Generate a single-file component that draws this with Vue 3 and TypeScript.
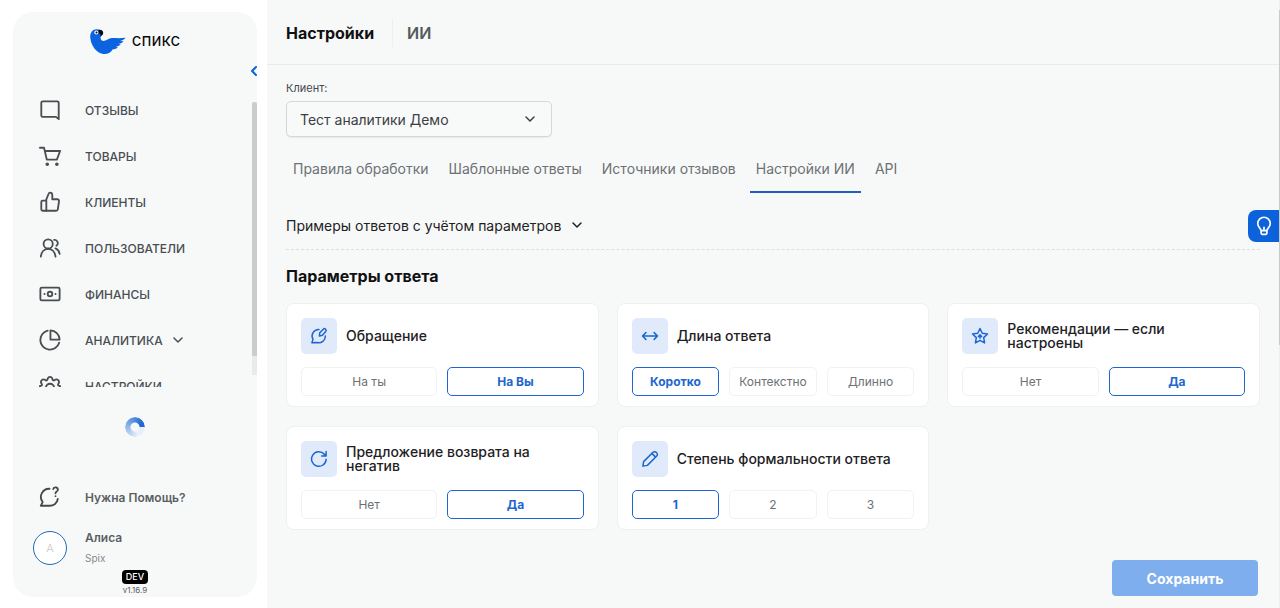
<script setup lang="ts">
import { ref } from 'vue'

type IconName =
  | 'message' | 'cart' | 'like' | 'users' | 'cash' | 'pie' | 'gear'
  | 'compose' | 'arrows' | 'star' | 'refresh' | 'pencil'

interface NavItem { label: string; icon: IconName; expandable?: boolean }
interface Param { title: string; icon: IconName; options: string[]; value: string }

const icons: Record<IconName, string> = {
  message: '<path d="M4 2.500h16a1.500 1.500 0 0 1 1.500 1.500v18L18.500 19.500H4A1.500 1.500 0 0 1 2.500 18V4A1.500 1.500 0 0 1 4 2.500z"/>',
  cart: '<path d="M1 3h4.500l3 13h11L23 6.500H6.500"/><circle cx="9" cy="21" r="1"/><circle cx="19.500" cy="21" r="1"/>',
  like: '<path d="M7.500 10.500 10.500 3c.3-1 .8-1.300 1.500-1.300 1.500 0 2.500 1 2.500 2.800V9H20c1.200 0 2 1 1.800 2.200l-1.200 8.500c-.2 1.200-1 1.800-2 1.800H4A1.500 1.500 0 0 1 2.500 20v-8A1.500 1.500 0 0 1 4 10.500h3.500z"/><path d="M8 10.500v11"/>',
  users: '<circle cx="10" cy="7.500" r="5"/><path d="M2 21.500c.5-5 3.500-8.500 8-8.500s7.500 3.500 8 8.500M16.500 3.200c3.500-.6 5.500 4 2.500 6.300M18 12.500c2.500 1 4 3 4.500 6"/>',
  cash: '<rect x="1.500" y="5" width="21" height="14" rx="1.500"/><circle cx="12" cy="12" r="2.500"/><path d="M6 12h.1M18 12h.1"/>',
  pie: '<path d="M9.500 1.800A10.500 10.500 0 1 0 22 15M12.500 1.500a10.500 10.500 0 0 1 10 10h-10z"/>',
  gear: '<path d="M12 2c1.800 0 2.500 1.200 2.800 3 .3 1 1.200 1.300 2 .7 1.500-1.200 3-1.300 4.200 0 1.200 1.200 1 2.700 0 4-.6.900-.2 1.800.8 2 3 .5 3 5.600 0 6-1 .2-1.400 1.100-.8 2 2 3-1 6-4.200 4H7.200c-3 2-6.200-1-4.200-4 .6-.9.200-1.800-.8-2-3-.4-3-5.500 0-6 1-.2 1.400-1.100.8-2-1-1.300-1.200-2.800 0-4 1.200-1.300 2.700-1.200 4.200 0 .8.6 1.700.3 2-.7C9.500 3.200 10.200 2 12 2z"/><circle cx="12" cy="14" r="4.500"/>',
  compose: '<path d="M12 3.300A8.800 8.800 0 0 0 4 16.500L2.500 21l6.500-.4c6.500 1.500 11.500-2.600 11.500-8.600M12.500 12l.5-4.200 4.800-4.900c1.900-1.900 5 1 3.200 3.100L16.500 11z"/>',
  arrows: '<path d="M2 12h20M6.500 7.500 2 12l4.500 4.500M17.500 7.500 22 12l-4.500 4.500"/>',
  star: '<path d="m12 2 3 6.300 7 1-5.100 4.900 1.200 7L12 17.800 5.900 21.200l1.200-7L2 9.300l7-1z"/><path d="M12 10.500v4.500M9.800 12.800 12 10.500l2.200 2.300"/>',
  refresh: '<path d="M21.500 12.500A9.700 9.700 0 1 1 19 5.500L21.500 8M21.500 2v6h-6"/>',
  pencil: '<path d="M2.500 21.500 3.500 15.500 16 3c2.800-2.800 7.800 2.200 5 5L8.500 20.500zM14.500 4.500l5 5"/>',
}

const nav: NavItem[] = [
  { label: 'ОТЗЫВЫ', icon: 'message' },
  { label: 'ТОВАРЫ', icon: 'cart' },
  { label: 'КЛИЕНТЫ', icon: 'like' },
  { label: 'ПОЛЬЗОВАТЕЛИ', icon: 'users' },
  { label: 'ФИНАНСЫ', icon: 'cash' },
  { label: 'АНАЛИТИКА', icon: 'pie', expandable: true },
  { label: 'НАСТРОЙКИ', icon: 'gear' },
]

const tabs = ['Правила обработки', 'Шаблонные ответы', 'Источники отзывов', 'Настройки ИИ', 'API']
const activeTab = ref('Настройки ИИ')
const client = ref('Тест аналитики Демо')

const params = ref<Param[]>([
  { title: 'Обращение', icon: 'compose', options: ['На ты', 'На Вы'], value: 'На Вы' },
  { title: 'Длина ответа', icon: 'arrows', options: ['Коротко', 'Контекстно', 'Длинно'], value: 'Коротко' },
  { title: 'Рекомендации — если настроены', icon: 'star', options: ['Нет', 'Да'], value: 'Да' },
  { title: 'Предложение возврата на негатив', icon: 'refresh', options: ['Нет', 'Да'], value: 'Да' },
  { title: 'Степень формальности ответа', icon: 'pencil', options: ['1', '2', '3'], value: '1' },
])
</script>

<template>
  <div class="layout">
    <aside class="sidebar">
      <a class="logo" href="#">
        <svg class="bird" viewBox="0 0 36 26" aria-hidden="true">
          <path fill="#0b63e0" d="M.3 9C-.3 4 2.500.3 6.500.3c3.500 0 5.500 2 5 4.700-.3 2-1.500 3.500-.5 5.500 1.200 2.200 4 1.500 6.500 0C21.500 8 26 9.800 35.500 8.800c-1.200 1.700-3 2.700-5.500 3.200l3.500.2c-1.500 1.800-3.300 2.600-5.700 2.800l3 .3c-1.400 1.600-3 2.300-5.300 2.400l2.300.5c-1.200 1.500-2.800 2-5 2C20.500 24 17 25.500 13 25 6.500 24 1.200 17 .3 9z" />
          <path fill="#0a0a0a" d="M8.500 1c2.500-.8 5 .7 4.700 3.200-.2 1.400-1 2.300-2.700 3.300.3-1.700 0-2.700-1.500-3z" />
          <circle cx="6.300" cy="3.600" r="2" fill="#fff" /><circle cx="6.500" cy="3.600" r="1" fill="#0a0a0a" />
        </svg>
        <span>спикс</span>
      </a>
      <button class="collapse" type="button" aria-label="Свернуть меню">
        <svg viewBox="0 0 8 12"><path d="M6 2 2 6l4 4" /></svg>
      </button>
      <div class="nav-area">
        <nav>
          <a v-for="item in nav" :key="item.label" href="#">
            <svg class="icon" viewBox="0 0 24 24" aria-hidden="true" v-html="icons[item.icon]" />
            <span>{{ item.label }}</span>
            <svg v-if="item.expandable" class="chevron" viewBox="0 0 10 10"><path d="m1 3 4 4 4-4" /></svg>
          </a>
        </nav>
        <div class="track"><div class="thumb" /></div>
      </div>
      <div class="bottom">
        <div class="spinner" role="status" aria-label="Загрузка" />
        <a class="help" href="#">
          <svg class="icon" viewBox="0 0 24 24" aria-hidden="true">
            <path d="M11.500 3A9 9 0 0 0 4 17.500L2 21.500h8.500c5 .5 9.500-2.500 10-7.500M15.500 3.500c.5-3 5.500-2.500 5 1-.3 1.800-2.500 1.500-2.500 3.500M18 11v.1" />
          </svg>
          <span>Нужна Помощь?</span>
        </a>
        <div class="user">
          <span class="avatar">А</span>
          <div><div class="name">Алиса</div><div class="company">Spix</div></div>
        </div>
        <span class="dev">DEV</span>
        <span class="version">v1.16.9</span>
      </div>
    </aside>

    <main>
      <header>
        <h1>Настройки</h1>
        <span class="crumb">ИИ</span>
      </header>

      <div class="content">
        <label for="client">Клиент:</label>
        <div class="select">
          <select id="client" v-model="client"><option>Тест аналитики Демо</option></select>
          <svg class="chevron" viewBox="0 0 10 10"><path d="m1 3 4 4 4-4" /></svg>
        </div>

        <div class="tabs" role="tablist">
          <button
            v-for="tab in tabs" :key="tab" type="button" role="tab"
            :aria-selected="tab === activeTab" :class="{ active: tab === activeTab }"
            @click="activeTab = tab"
          >{{ tab }}</button>
        </div>

        <button class="examples" type="button">
          <span>Примеры ответов с учётом параметров</span>
          <svg class="chevron" viewBox="0 0 10 10"><path d="m1 3 4 4 4-4" /></svg>
        </button>

        <h2>Параметры ответа</h2>
        <div class="cards">
          <section v-for="param in params" :key="param.title" class="card">
            <div class="card-head">
              <span class="tile"><svg viewBox="0 0 24 24" aria-hidden="true" v-html="icons[param.icon]" /></span>
              <h3>{{ param.title }}</h3>
            </div>
            <div class="options">
              <button
                v-for="option in param.options" :key="option" type="button"
                :aria-pressed="option === param.value" :class="{ active: option === param.value }"
                @click="param.value = option"
              >{{ option }}</button>
            </div>
          </section>
        </div>
      </div>

      <footer><button class="save" type="button">Сохранить</button></footer>
    </main>

    <div class="page-track"><div class="page-thumb" /></div>
    <button class="tips" type="button" aria-label="Подсказки">
      <svg viewBox="0 0 24 24"><path d="M8.500 17.500c0-2.500-4-4-4-8.500a7.500 7.500 0 0 1 15 0c0 4.500-4 6-4 8.500zM8.500 17.500v3a1.500 1.500 0 0 0 1.500 1.500h4a1.500 1.500 0 0 0 1.500-1.500v-3M12 17v-3.500" /></svg>
    </button>
  </div>
</template>

<style>
body { background: #fff; }
</style>

<style scoped>
* { box-sizing: border-box; }
.layout {
  position: relative;
  display: flex;
  height: 100vh;
  min-height: 520px;
  overflow: hidden;
  font-family: Inter, "Open Sans", sans-serif;
  color: #111;
}
button, select { font: inherit; color: inherit; cursor: pointer; }
button { padding: 0; border: 0; background: none; }
a { color: inherit; text-decoration: none; }
h1, h2, h3 { margin: 0; }
svg { fill: none; stroke: currentColor; stroke-width: 2; stroke-linecap: round; stroke-linejoin: round; }
.chevron { width: 10px; height: 10px; stroke-width: 1.5; flex: none; }

.sidebar {
  position: relative;
  flex: none;
  display: flex;
  flex-direction: column;
  width: 244px;
  margin: 12px 10px 11px 13px;
  border-radius: 20px;
  background: #f7f9f9;
  color: #4a4e52;
}
.logo {
  display: flex;
  align-items: center;
  justify-content: center;
  gap: 6px;
  height: 59px;
  flex: none;
  margin-bottom: 16px;
  color: #0a0a0a;
  font-size: 17px;
  font-weight: 400;
}
.logo span { padding-bottom: 4px; }
.bird { width: 36px; height: 26px; stroke: none; }
.collapse { position: absolute; top: 52px; right: -1px; width: 8px; height: 14px; color: #0b63d6; }
.collapse svg { display: block; width: 8px; height: 14px; }
.nav-area { flex: 1; min-height: 0; display: flex; justify-content: space-between; }
nav { overflow: hidden; flex: 1; }
nav a { display: flex; align-items: center; height: 46px; padding-left: 26px; font-size: 12px; font-weight: 500; }
.icon { width: 22px; height: 22px; margin-right: 24px; flex: none; }
nav .chevron { margin-left: 10px; }
.track { width: 5px; margin: 15px 0 12px; background: #e9ebeb; }
.thumb { height: 93%; border-radius: 3px 3px 0 0; background: #cbcdcd; }
.bottom { flex: none; display: flex; flex-direction: column; align-items: center; height: 210px; padding-top: 30px; }
.spinner {
  width: 20px;
  height: 20px;
  flex: none;
  border-radius: 50%;
  background: conic-gradient(from 90deg, #e6effb 0%, #e6effb 20%, #1f69d2 92%, #1f69d2 100%);
  mask: radial-gradient(circle, transparent 4px, #000 5px);
}
.help { display: flex; align-items: center; align-self: stretch; height: 40px; margin-top: 40px; padding-left: 26px; font-size: 12px; font-weight: 600; color: #5b5f63; }
.help .icon { color: #44484c; }
.user { display: flex; align-items: center; align-self: stretch; gap: 18px; height: 34px; margin-top: 14px; padding-left: 20px; }
.avatar {
  display: flex;
  align-items: center;
  justify-content: center;
  width: 34px;
  height: 34px;
  border: 1px solid #1f69b8;
  border-radius: 50%;
  background: #fff;
  color: #cfd2d4;
  font-size: 11px;
}
.name { font-size: 12px; line-height: 16px; font-weight: 600; color: #5b5f63; }
.company { margin-top: 4px; font-size: 10px; line-height: 16px; color: #85898c; }
.dev { margin-top: 5px; padding: 0 4px; border-radius: 4px; background: #000; color: #fff; font-size: 9px; line-height: 14px; font-weight: 500; }
.version { font-size: 8px; line-height: 12px; color: #5b5f63; }

main { flex: 1; min-width: 0; display: flex; flex-direction: column; background: #f7f9f9; }
header { display: flex; align-items: center; flex: none; height: 65px; padding: 2px 19px 0; border-bottom: 1px solid #e8eaec; }
h1 { padding-right: 18px; font-size: 16px; line-height: 28px; font-weight: 700; border-right: 1px solid #eceeef; }
.crumb { padding-left: 14px; font-size: 16px; font-weight: 600; color: #55595c; }
.content { padding: 15px 19px 0; }
label { display: block; font-size: 11px; line-height: 16px; color: #44484c; }
.select { position: relative; width: 266px; margin-top: 5px; color: #3c4043; }
select {
  display: block;
  width: 100%;
  height: 36px;
  padding: 0 40px 0 13px;
  appearance: none;
  border: 1px solid #d5d8da;
  border-radius: 5px;
  background: #f8f9f9;
  box-shadow: 0 1px 1px #00000010;
  font-size: 14px;
}
.select .chevron { position: absolute; right: 17px; top: 13px; pointer-events: none; }
.tabs { display: flex; gap: 8px; height: 42px; margin: 14px 0 0 1px; }
.tabs button { padding: 0 6px 5px; border-bottom: 2px solid transparent; font-size: 14px; color: #6d7174; white-space: nowrap; }
.tabs .active { border-color: #1f5fc4; }
.examples { display: flex; align-items: center; gap: 11px; width: 100%; height: 57px; padding-top: 8px; border-bottom: 1px dashed #dcdfe1; font-size: 14px; color: #1e2124; }
h2 { margin: 16px 0 17px; font-size: 16px; line-height: 20px; font-weight: 700; }
.cards { display: grid; grid-template-columns: repeat(3, minmax(0, 1fr)); gap: 19px 18px; }
.card { display: flex; flex-direction: column; gap: 13px; padding: 14px 14px 10px; border: 1px solid #eef0f1; border-radius: 8px; background: #fff; }
.card-head { display: flex; align-items: center; gap: 9px; height: 36px; }
.tile { display: flex; align-items: center; justify-content: center; flex: none; width: 36px; height: 36px; border-radius: 5px; background: #e0eafa; color: #1d66d0; }
.tile svg { width: 18px; height: 18px; stroke-width: 2; }
h3 { max-width: 220px; font-size: 14px; line-height: 14px; font-weight: 500; color: #1e2124; }
.options { display: flex; gap: 10px; }
.options button { flex: 1 1 0; min-width: 0; height: 29px; border: 1px solid #f1f2f4; border-radius: 5px; font-size: 12px; color: #6d7174; }
.options .active { border-color: #1d66d0; font-weight: 700; color: #1d66d0; }

footer { display: flex; justify-content: flex-end; margin-top: auto; padding: 0 21px 12px; }
.save { width: 146px; height: 36px; border-radius: 4px; background: #7eaeed; color: #fff; font-size: 14px; font-weight: 700; }
.page-track { flex: none; width: 1px; padding-top: 10px; background: #edefef; }
.page-thumb { height: 56%; background: #c8caca; }
.tips {
  position: absolute;
  top: 210px;
  right: 1px;
  display: flex;
  align-items: center;
  justify-content: center;
  width: 31px;
  height: 32px;
  border-radius: 8px 0 0 8px;
  background: #0c62da;
  color: #fff;
}
.tips svg { width: 20px; height: 20px; }
</style>
